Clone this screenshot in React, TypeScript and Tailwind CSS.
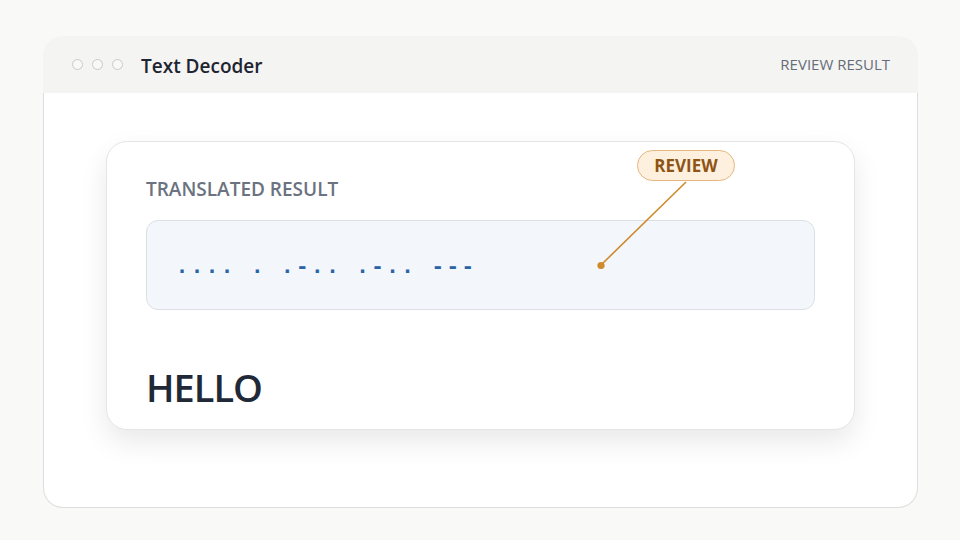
import React from "react";

export default function App() {
  return (
    <div
      className="w-[960px] h-[540px] bg-[#f9f9f7] pt-[36px] pl-[43px]"
      style={{ fontFamily: '"Open Sans", "Noto Sans", sans-serif' }}
    >
      <div className="w-[875px] h-[472px] flex flex-col">
        <div className="h-[57px] bg-[#f4f4f2] rounded-t-[20px] flex items-center pl-[29px] pr-[28px]">
          <div className="flex gap-[9px]">
            <span className="w-[11px] h-[11px] rounded-full border border-[#c9c9c9] bg-[#f8f8f8]" />
            <span className="w-[11px] h-[11px] rounded-full border border-[#c9c9c9] bg-[#f8f8f8]" />
            <span className="w-[11px] h-[11px] rounded-full border border-[#c9c9c9] bg-[#f8f8f8]" />
          </div>
          <div className="ml-[18px] text-[19px] font-semibold text-[#1f2530] leading-none pt-[4px]">
            Text Decoder
          </div>
          <div className="ml-auto text-[15px] font-medium text-[#666c78] leading-none">
            REVIEW RESULT
          </div>
        </div>
        <div className="flex-1 bg-white border border-t-0 border-[#dedede] rounded-b-[20px] pt-[48px] pl-[62px]">
          <div className="relative w-[749px] h-[289px] bg-white border border-[#e3e5e8] rounded-[21px] shadow-[0_12px_28px_rgba(0,0,0,0.09)] pt-[35px] px-[39px]">
            <div className="text-[19px] leading-[24px] font-semibold text-[#6b7280]">
              TRANSLATED RESULT
            </div>
            <div className="mt-[19px] h-[90px] bg-[#f3f6fb] border border-[#dce0e5] rounded-[12px] flex items-center pl-[29px] pt-[1px]">
              <span
                className="text-[20px] font-bold text-[#2b64a6] tracking-[3px] whitespace-pre"
                style={{ fontFamily: '"DejaVu Sans Mono", monospace' }}
              >
                .... . .-.. .-.. ---
              </span>
            </div>
            <div className="mt-[53px] text-[38px] leading-[48px] font-semibold tracking-[-1px] text-[#1f2937]">
              HELLO
            </div>

            <svg
              className="absolute left-0 top-0 pointer-events-none"
              width="749"
              height="289"
              viewBox="0 0 749 289"
            >
              <line x1="579" y1="40" x2="494" y2="123" stroke="#cf8a2c" strokeWidth="1.6" />
              <circle cx="494" cy="123.5" r="3.6" fill="#cf8a2c" />
            </svg>
            <div className="absolute left-[530px] top-[8px] w-[98px] h-[31px] rounded-full bg-[#fdf0de] border border-[#e6b77c] flex items-center justify-center text-[17px] font-bold text-[#8f5414]">
              REVIEW
            </div>
          </div>
        </div>
      </div>
    </div>
  );
}
